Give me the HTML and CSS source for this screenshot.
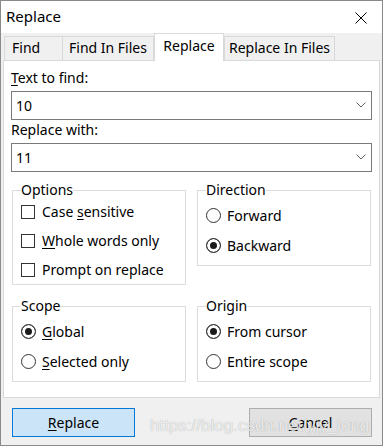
FILE: index.html
```html
<!DOCTYPE html>
<html lang="en">
<head>
    <meta charset="UTF-8">
    <meta name="viewport" content="width=device-width, initial-scale=1.0">
    <title>Replace</title>
    <link rel="stylesheet" href="styles.css">
</head>
<body>

    <div class="window">
        <div class="titlebar">
            <span class="title">Replace</span>
            <svg class="close" width="12" height="12" viewBox="0 0 12 12">
                <path d="M0.5 0.5 L11.5 11.5 M11.5 0.5 L0.5 11.5" stroke="#000" stroke-width="1" fill="none"/>
            </svg>
        </div>

        <div class="tabs">
            <div class="tab tab-find">Find</div>
            <div class="tab tab-files">Find In Files</div>
            <div class="tab tab-replace active">Replace</div>
            <div class="tab tab-replace-files">Replace In Files</div>
        </div>

        <div class="panel">
            <label class="field-label"><u>T</u>ext to find:</label>
            <div class="combo">
                <span class="combo-value">10</span>
                <svg class="chevron" width="10" height="6" viewBox="0 0 10 6">
                    <path d="M0.5 0.5 L5 5 L9.5 0.5" stroke="#606060" stroke-width="1" fill="none"/>
                </svg>
            </div>

            <label class="field-label">Replace with:</label>
            <div class="combo">
                <span class="combo-value">11</span>
                <svg class="chevron" width="10" height="6" viewBox="0 0 10 6">
                    <path d="M0.5 0.5 L5 5 L9.5 0.5" stroke="#606060" stroke-width="1" fill="none"/>
                </svg>
            </div>

            <div class="groups groups-top">
                <fieldset class="group options">
                    <legend>Options</legend>
                    <label class="row"><input type="checkbox" class="check"><span>Case <u>s</u>ensitive</span></label>
                    <label class="row"><input type="checkbox" class="check"><span><u>W</u>hole words only</span></label>
                    <label class="row"><input type="checkbox" class="check"><span>Prompt on replace</span></label>
                </fieldset>

                <fieldset class="group">
                    <legend>Direction</legend>
                    <label class="row"><input type="radio" name="dir" class="radio"><span>Forward</span></label>
                    <label class="row"><input type="radio" name="dir" class="radio" checked><span>Backward</span></label>
                </fieldset>
            </div>

            <div class="groups groups-bottom">
                <fieldset class="group">
                    <legend>Scope</legend>
                    <label class="row"><input type="radio" name="scope" class="radio" checked><span><u>G</u>lobal</span></label>
                    <label class="row"><input type="radio" name="scope" class="radio"><span><u>S</u>elected only</span></label>
                </fieldset>

                <fieldset class="group">
                    <legend>Origin</legend>
                    <label class="row"><input type="radio" name="origin" class="radio" checked><span>From cursor</span></label>
                    <label class="row"><input type="radio" name="origin" class="radio"><span>Entire scope</span></label>
                </fieldset>
            </div>
        </div>

        <div class="footer">
            <button class="btn btn-default"><u>R</u>eplace</button>
            <button class="btn"><u>C</u>ancel</button>
        </div>

        <div class="watermark">https://blog.csdn.net/yjy_long</div>
    </div>

</body>
</html>
```

FILE: styles.css
```css
body {
    margin: 0;
    padding: 0;
    font-family: "Noto Sans", "Open Sans", sans-serif;
    font-size: 14px;
    color: #000;
    background-color: #f0f0f0;
}

.window {
    position: relative;
    width: 383px;
    height: 446px;
    box-sizing: border-box;
    border: 1px solid #8a8a8a;
    background-color: #f0f0f0;
    display: flex;
    flex-direction: column;
}

.titlebar {
    height: 32px;
    background-color: #fff;
    display: flex;
    align-items: center;
    justify-content: space-between;
    padding: 0 15px 0 5px;
}

.title {
    font-size: 15px;
    line-height: 20px;
    margin-top: -2px;
}

.close {
    margin-top: 2px;
}

/* tab strip */
.tabs {
    height: 27px;
    display: flex;
    align-items: flex-end;
    padding-left: 3px;
}

.tab {
    box-sizing: border-box;
    height: 24px;
    line-height: 22px;
    border: 1px solid #d9d9d9;
    border-bottom: none;
    background-color: #f0f0f0;
    text-align: center;
}

.tab-find {
    width: 59px;
    text-align: left;
    padding-left: 7px;
}

.tab-files {
    width: 92px;
    margin-left: -1px;
}

.tab-replace {
    width: 70px;
}

.tab-replace-files {
    width: 111px;
}

.tab.active {
    position: relative;
    height: 28px;
    margin-bottom: -1px;
    line-height: 24px;
    background-color: #fff;
    z-index: 1;
}

.panel {
    margin: 0 2px;
    padding: 7px 7px 15px 7px;
    background-color: #fff;
    border: 1px solid #d9d9d9;
}

.field-label {
    display: block;
    line-height: 20px;
}

.combo {
    box-sizing: border-box;
    height: 29px;
    margin: 3px 0 0 0;
    border: 1px solid #7a7a7a;
    display: flex;
    align-items: center;
    justify-content: space-between;
    padding: 0 5px 0 4px;
    background-color: #fff;
}

.combo-value {
    line-height: 20px;
}

.chevron {
    margin-top: -2px;
}

/* group boxes */
.groups {
    display: flex;
    align-items: flex-start;
    gap: 11px;
    padding-left: 1px;
}

.groups-top {
    margin-top: 8px;
}

.groups-bottom {
    margin-top: 11px;
}

.group {
    box-sizing: border-box;
    width: 174px;
    margin: 0;
    padding: 0 8px 5px 8px;
    border: 1px solid #dcdcdc;
    min-width: 0;
}

.group legend {
    padding: 0;
    line-height: 20px;
}

.row {
    display: flex;
    align-items: center;
    height: 30px;
}

.options {
    padding-bottom: 0;
}

.options legend {
    margin-bottom: -3px;
}

.options .row {
    height: 29px;
}

.check {
    appearance: none;
    -webkit-appearance: none;
    box-sizing: border-box;
    width: 14px;
    height: 14px;
    margin: 0 7px 0 0;
    border: 1px solid #333;
    background-color: #fff;
}

.radio {
    appearance: none;
    -webkit-appearance: none;
    box-sizing: border-box;
    width: 15px;
    height: 15px;
    margin: 0 6px 0 0;
    border: 1px solid #333;
    border-radius: 50%;
    background-color: #fff;
}

.radio:checked {
    background-color: #1a1a1a;
    box-shadow: inset 0 0 0 3px #fff;
}

u {
    text-underline-offset: 2px;
}

/* buttons */
.footer {
    display: flex;
    justify-content: space-between;
    padding: 10px 10px 0 11px;
}

.btn {
    box-sizing: border-box;
    width: 123px;
    height: 29px;
    font-family: inherit;
    font-size: 14px;
    color: #000;
    background-color: #e1e1e1;
    border: 1px solid #adadad;
    padding: 0;
}

.btn-default {
    background-color: #cce4f7;
    border-color: #0078d7;
}

.watermark {
    position: absolute;
    left: 149px;
    top: 415px;
    font-family: "Liberation Sans", Arial, sans-serif;
    font-size: 17px;
    line-height: 20px;
    color: rgba(255, 255, 255, 0.8);
    text-shadow: 0 0 1px rgba(0, 0, 0, 0.35);
    white-space: nowrap;
}
```
